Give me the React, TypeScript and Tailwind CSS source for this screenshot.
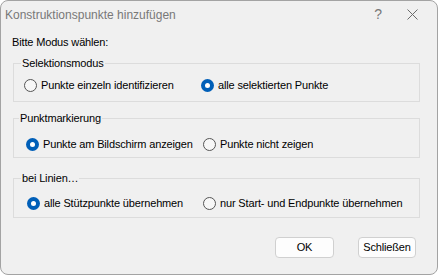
import React from "react";

function Radio({ checked }: { checked: boolean }) {
  return checked ? (
    <span className="flex h-[13px] w-[13px] shrink-0 items-center justify-center rounded-full bg-[#005fb8]">
      <span className="h-[5px] w-[5px] rounded-full bg-white" />
    </span>
  ) : (
    <span className="h-[13px] w-[13px] shrink-0 rounded-full border border-[#555555] bg-[#f7f7f7]" />
  );
}

function Option({ checked, label }: { checked: boolean; label: string }) {
  return (
    <div className="flex items-center gap-[4px] whitespace-nowrap">
      <Radio checked={checked} />
      <span>{label}</span>
    </div>
  );
}

function Group({
  title,
  titleLeft,
  pt,
  pl,
  h,
  col,
  a,
  b,
  checkedA,
}: {
  title: string;
  titleLeft: string;
  pt: string;
  pl: string;
  h: string;
  col: string;
  a: string;
  b: string;
  checkedA: boolean;
}) {
  return (
    <div className={`relative ml-[12px] w-[407px] border border-[#dcdcdc] ${h}`}>
      <span className={`absolute top-[-8px] ${titleLeft} whitespace-nowrap bg-[#f0f0f0] px-[1px] leading-[14px]`}>
        {title}
      </span>
      <div className={`flex items-center ${pt} ${pl}`}>
        <div className={`shrink-0 ${col}`}>
          <Option checked={checkedA} label={a} />
        </div>
        <Option checked={!checkedA} label={b} />
      </div>
    </div>
  );
}

export default function App() {
  return (
    <div
      className="h-[276px] w-[439px] bg-white text-[11px] tracking-[-0.15px] text-black"
      style={{ fontFamily: '"Liberation Sans", Arial, sans-serif' }}
    >
      <div className="flex h-[275px] w-[438px] flex-col rounded-[8px] border border-[#a3a3a3] bg-[#f0f0f0]">
        <div className="flex h-[27px] items-center text-[#787878]">
          <span className="ml-[4px] whitespace-nowrap text-[12px] tracking-normal">Konstruktionspunkte hinzufügen</span>
          <span className="ml-auto mr-[25px] text-[14px] font-light">?</span>
          <svg className="mr-[19px]" width="11" height="11" viewBox="0 0 11 11">
            <path d="M0.5 0.5 L10.5 10.5 M10.5 0.5 L0.5 10.5" stroke="#6b6b6b" strokeWidth="1" />
          </svg>
        </div>
        <div className="ml-[11px] mt-[7px] leading-[14px]">Bitte Modus wählen:</div>
        <div className="mt-[14px]">
          <Group
            title="Selektionsmodus"
            titleLeft="left-[7px]"
            pt="pt-[13px]"
            pl="pl-[10px]"
            h="h-[39px]"
            col="w-[177px]"
            a="Punkte einzeln identifizieren"
            b="alle selektierten Punkte"
            checkedA={false}
          />
        </div>
        <div className="mt-[16px]">
          <Group
            title="Punktmarkierung"
            titleLeft="left-[5px]"
            pt="pt-[17px]"
            pl="pl-[12px]"
            h="h-[40px]"
            col="w-[177px]"
            a="Punkte am Bildschirm anzeigen"
            b="Punkte nicht zeigen"
            checkedA={true}
          />
        </div>
        <div className="mt-[20px]">
          <Group
            title="bei Linien…"
            titleLeft="left-[7px]"
            pt="pt-[16px]"
            pl="pl-[13px]"
            h="h-[40px]"
            col="w-[176px]"
            a="alle Stützpunkte übernehmen"
            b="nur Start- und Endpunkte übernehmen"
            checkedA={true}
          />
        </div>
        <div className="mt-[19px] flex">
          <button className="ml-[274px] flex h-[21px] w-[59px] items-center justify-center rounded-[4px] border border-[#d0d0d0] bg-[#fdfdfd]">
            OK
          </button>
          <button className="ml-[24px] flex h-[21px] w-[58px] items-center justify-center rounded-[4px] border border-[#d0d0d0] bg-[#fdfdfd]">
            Schließen
          </button>
        </div>
      </div>
    </div>
  );
}
